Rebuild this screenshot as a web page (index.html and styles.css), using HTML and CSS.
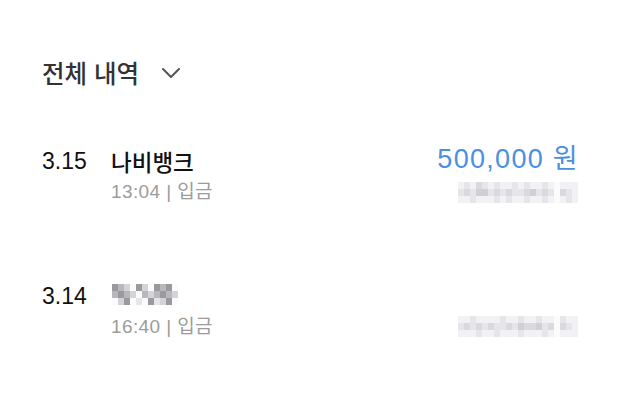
FILE: index.html
```html
<!DOCTYPE html>
<html lang="ko">
<head>
  <meta charset="UTF-8">
  <title>전체 내역</title>
  <link rel="stylesheet" href="styles.css">
</head>
<body>
  <div class="filter">
    <span>전체 내역</span>
    <svg class="chevron" width="20" height="12" viewBox="0 0 20 12">
      <path d="M2 2 L10 10 L18 2" fill="none" stroke="#555" stroke-width="2" stroke-linecap="round" stroke-linejoin="round"/>
    </svg>
  </div>

  <div class="row first">
    <div class="date">3.15</div>
    <div class="main">
      <div class="name">나비뱅크</div>
      <div class="sub">13:04 | 입금</div>
    </div>
    <div class="side">
      <div class="amount">500,000 원</div>
      <div class="mosaic wide">
        <i class="a"></i><i class="b"></i><i class="a"></i><i class="c"></i><i class="b"></i><i class="a"></i><i class="b"></i><i class="a"></i><i class="a"></i><i class="b"></i><i class="a"></i><i class="b"></i><i class="a"></i><i class="a"></i><i class="b"></i><i class="a"></i><i class="e"></i><i class="a"></i><i class="a"></i><i class="a"></i>
        <i class="b"></i><i class="c"></i><i class="b"></i><i class="d"></i><i class="d"></i><i class="b"></i><i class="c"></i><i class="b"></i><i class="c"></i><i class="b"></i><i class="b"></i><i class="c"></i><i class="d"></i><i class="b"></i><i class="c"></i><i class="b"></i><i class="e"></i><i class="c"></i><i class="b"></i><i class="a"></i>
        <i class="a"></i><i class="a"></i><i class="b"></i><i class="a"></i><i class="a"></i><i class="a"></i><i class="b"></i><i class="a"></i><i class="b"></i><i class="a"></i><i class="a"></i><i class="b"></i><i class="a"></i><i class="a"></i><i class="b"></i><i class="a"></i><i class="e"></i><i class="a"></i><i class="b"></i><i class="a"></i>
      </div>
    </div>
  </div>

  <div class="row second">
    <div class="date">3.14</div>
    <div class="main">
      <div class="mosaic name-blur">
        <i class="f"></i><i class="g"></i><i class="h"></i><i class="e"></i><i class="f"></i><i class="h"></i><i class="e"></i><i class="f"></i><i class="g"></i><i class="f"></i><i class="e"></i>
        <i class="g"></i><i class="f"></i><i class="g"></i><i class="h"></i><i class="e"></i><i class="g"></i><i class="h"></i><i class="g"></i><i class="f"></i><i class="g"></i><i class="h"></i>
        <i class="e"></i><i class="h"></i><i class="f"></i><i class="e"></i><i class="b"></i><i class="e"></i><i class="f"></i><i class="b"></i><i class="h"></i><i class="f"></i><i class="e"></i>
      </div>
      <div class="sub">16:40 | 입금</div>
    </div>
    <div class="side">
      <div class="mosaic wide low">
        <i class="a"></i><i class="a"></i><i class="b"></i><i class="a"></i><i class="a"></i><i class="a"></i><i class="a"></i><i class="b"></i><i class="a"></i><i class="a"></i><i class="b"></i><i class="a"></i><i class="a"></i><i class="b"></i><i class="a"></i><i class="a"></i><i class="e"></i><i class="b"></i><i class="a"></i><i class="a"></i>
        <i class="b"></i><i class="c"></i><i class="b"></i><i class="c"></i><i class="b"></i><i class="c"></i><i class="b"></i><i class="b"></i><i class="c"></i><i class="b"></i><i class="d"></i><i class="c"></i><i class="c"></i><i class="d"></i><i class="b"></i><i class="c"></i><i class="e"></i><i class="c"></i><i class="b"></i><i class="a"></i>
        <i class="a"></i><i class="a"></i><i class="a"></i><i class="b"></i><i class="a"></i><i class="a"></i><i class="b"></i><i class="a"></i><i class="a"></i><i class="a"></i><i class="b"></i><i class="a"></i><i class="a"></i><i class="a"></i><i class="b"></i><i class="a"></i><i class="e"></i><i class="a"></i><i class="a"></i><i class="a"></i>
      </div>
    </div>
  </div>
</body>
</html>
```

FILE: styles.css
```css
body {
  margin: 0;
  padding: 52px 42px 0 42px;
  background: #ffffff;
  font-family: "Liberation Sans", "Noto Sans CJK KR", sans-serif;
  color: #111;
}

.filter {
  display: flex;
  align-items: center;
  gap: 22px;
  height: 40px;
  font-family: "Noto Sans CJK KR", sans-serif;
  font-size: 24.5px;
  font-weight: 500;
  color: #333;
}

.chevron {
  margin-top: 2px;
}

.row {
  display: flex;
  align-items: flex-start;
}

.row.first {
  margin-top: 53px;
}

.row.second {
  margin-top: 76px;
}

.date {
  width: 69px;
  font-size: 23px;
  line-height: 32px;
  color: #111;
}

.main {
  flex: 1;
}

.name {
  font-family: "Noto Sans CJK KR", sans-serif;
  font-size: 22.5px;
  font-weight: 500;
  line-height: 32px;
}

.sub {
  margin-top: 3px;
  font-size: 19px;
  letter-spacing: 0.4px;
  line-height: 24px;
  color: #9c9c9c;
}

.side {
  display: flex;
  flex-direction: column;
  align-items: flex-end;
}

.amount {
  margin-top: -2px;
  margin-right: -1px;
  font-size: 27px;
  letter-spacing: 1.3px;
  line-height: 32px;
  color: #4a90e2;
}

.mosaic {
  display: grid;
  filter: blur(0.6px);
}

.mosaic i {
  display: block;
}

.wide {
  grid-template-columns: repeat(20, 6px);
  grid-template-rows: repeat(3, 7px);
  margin-top: 7px;
}

.wide.low {
  margin-top: 36px;
}

.name-blur {
  grid-template-columns: repeat(11, 6px);
  grid-template-rows: repeat(3, 7px);
  margin: 4px 0 10px 1px;
}

.name-blur + .sub {
  margin-top: 0;
}

.a { background: #f2f2f4; }
.b { background: #e6e6ea; }
.c { background: #dadade; }
.d { background: #cfcfd6; }
.e { background: #fbfbfb; }
.f { background: #9a9a9e; }
.g { background: #b8b8bc; }
.h { background: #d4d4d8; }
```
